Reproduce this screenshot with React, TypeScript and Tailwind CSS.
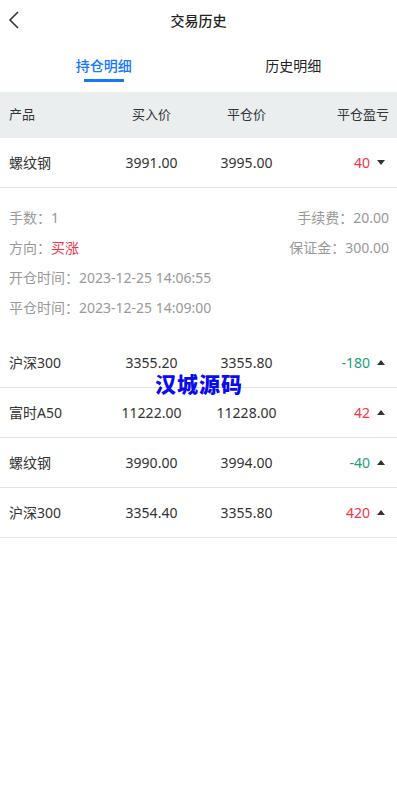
import React from "react";

const rows = [
  { name: "沪深300", buy: "3355.20", close: "3355.80", pnl: "-180" },
  { name: "富时A50", buy: "11222.00", close: "11228.00", pnl: "42" },
  { name: "螺纹钢", buy: "3990.00", close: "3994.00", pnl: "-40" },
  { name: "沪深300", buy: "3354.40", close: "3355.80", pnl: "420" },
];

function Caret({ up }: { up?: boolean }) {
  return (
    <svg width="8" height="5" viewBox="0 0 8 5" className="mr-[4px]">
      {up ? <path d="M0 5 L4 0 L8 5 Z" fill="#333" /> : <path d="M0 0 L8 0 L4 5 Z" fill="#333" />}
    </svg>
  );
}

function Row({ name, buy, close, pnl, up = true }: { name: string; buy: string; close: string; pnl: string; up?: boolean }) {
  const neg = pnl.startsWith("-");
  return (
    <div className="grid grid-cols-4 items-center h-[50px] border-b border-[#e3e3e3] pl-[9px] pr-[8px] text-[14px] text-[#333]">
      <div>{name}</div>
      <div className="text-center">{buy}</div>
      <div className="text-center">{close}</div>
      <div className="flex items-center justify-end gap-[7px]">
        <span className={neg ? "text-[#1b9e77]" : "text-[#f5334a]"}>{pnl}</span>
        <Caret up={up} />
      </div>
    </div>
  );
}

export default function App() {
  return (
    <div
      className="relative min-h-[788px] bg-white"
      style={{ fontFamily: '"Noto Sans", "Noto Sans CJK SC", sans-serif' }}
    >
      {/* header */}
      <div className="relative flex items-center justify-center h-[40px]">
        <svg width="12" height="18" viewBox="0 0 12 18" className="absolute left-[8px] top-[11px]">
          <path d="M10 1 L2 9 L10 17" fill="none" stroke="#333" strokeWidth="1.6" />
        </svg>
        <span className="text-[14px] font-medium text-[#222]">交易历史</span>
      </div>

      {/* tabs */}
      <div className="grid grid-cols-2 h-[52px] px-[9px]">
        <div className="flex flex-col items-center pt-[17px]">
          <span className="text-[14px] font-medium text-[#1677ff] leading-[18px]">持仓明细</span>
          <div className="mt-[4px] w-[40px] h-[3px] bg-[#1677ff]" />
        </div>
        <div className="flex flex-col items-center pt-[17px]">
          <span className="text-[14px] text-[#222] leading-[18px]">历史明细</span>
        </div>
      </div>

      {/* table head */}
      <div className="grid grid-cols-4 items-center h-[46px] bg-[#eaeeef] pl-[9px] pr-[8px] text-[13px] text-[#333]">
        <div>产品</div>
        <div className="text-center">买入价</div>
        <div className="text-center">平仓价</div>
        <div className="text-right">平仓盈亏</div>
      </div>

      <Row name="螺纹钢" buy="3991.00" close="3995.00" pnl="40" up={false} />

      {/* detail */}
      <div className="pl-[9px] pr-[8px] py-[15px] text-[14px] text-[#999] leading-[30px]">
        <div className="flex justify-between">
          <span>手数：1</span>
          <span>手续费：20.00</span>
        </div>
        <div className="flex justify-between">
          <span>
            方向：<span className="text-[#f5334a]">买涨</span>
          </span>
          <span>保证金：300.00</span>
        </div>
        <div>开仓时间：2023-12-25 14:06:55</div>
        <div>平仓时间：2023-12-25 14:09:00</div>
      </div>

      {rows.map((r, i) => (
        <Row key={i} {...r} />
      ))}

      {/* watermark */}
      <div className="absolute left-[155px] top-[371px] text-[21px] font-black text-[#0a0aee] tracking-[1px] leading-[26px]">
        汉城源码
      </div>
    </div>
  );
}
